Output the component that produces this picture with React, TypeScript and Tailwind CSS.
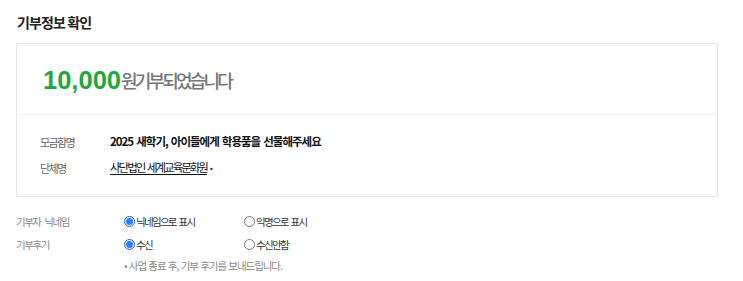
const KR = "font-['Noto_Sans_CJK_KR','Noto_Sans',sans-serif]";

function Radio({ checked, label }: { checked?: boolean; label: string }) {
  return (
    <label className="flex items-center">
      {checked ? (
        <span className="w-[11px] h-[11px] rounded-full border border-[#1d5fd6] bg-white flex items-center justify-center">
          <span className="w-[7px] h-[7px] rounded-full bg-[#2f7cf0]" />
        </span>
      ) : (
        <span className="w-[11px] h-[11px] rounded-full border border-[#777] bg-white" />
      )}
      <span className="text-[10.5px] tracking-[-1.7px] [word-spacing:2px] text-[#333] ml-[1px]">{label}</span>
    </label>
  );
}

export default function App() {
  return (
    <div className={`bg-white w-[743px] h-[281px] pl-4 pr-[25px] ${KR}`}>
      {/* TITLE */}
      <h2 className="pt-[12px] h-[43px] text-[14px] leading-[20px] font-bold tracking-[-0.9px] text-[#222] pl-[1px]">
        기부정보 확인
      </h2>

      {/* BOX */}
      <div className="border border-[#e6e6e6]">
        <div className="h-[71px] flex items-center pl-[26px] pt-[3px] border-b border-[#f0f0f0]">
          <span className="font-['Liberation_Sans',Arial,sans-serif] font-bold text-[25.5px] text-[#1ea83c]">
            10,000
          </span>
          <span className="text-[18px] font-medium text-[#777] tracking-[-2.8px]">원기부되었습니다</span>
        </div>

        <div className="pt-[14px] pb-[15px] pl-[23px]">
          <div className="flex items-center h-[26px]">
            <span className="w-[70px] text-[11px] tracking-[-1.6px] text-[#666]">모금함명</span>
            <span className="text-[11.5px] font-bold tracking-[-1px] [word-spacing:1.5px] text-[#111]">
              2025 새학기, 아이들에게 학용품을 선물해주세요
            </span>
          </div>
          <div className="flex items-center h-[26px]">
            <span className="w-[70px] text-[11px] tracking-[-1.6px] text-[#666]">단체명</span>
            <span className="text-[11.5px] tracking-[-2px] [word-spacing:2px] text-[#111] underline underline-offset-2">
              사단법인 세계교육문화원
            </span>
            <span className="text-[8px] text-[#111] ml-[3px]">•</span>
          </div>
        </div>
      </div>

      {/* OPTIONS */}
      <div className="mt-[13px]">
        <div className="flex items-center h-[23px]">
          <span className="w-[108px] text-[10.5px] tracking-[-1.5px] [word-spacing:3px] text-[#888]">기부자 닉네임</span>
          <div className="w-[120px]">
            <Radio checked label="닉네임으로 표시" />
          </div>
          <Radio label="익명으로 표시" />
        </div>
        <div className="flex items-center h-[23px]">
          <span className="w-[108px] text-[10.5px] tracking-[-1.4px] text-[#888]">기부후기</span>
          <div className="w-[120px]">
            <Radio checked label="수신" />
          </div>
          <Radio label="수신안함" />
        </div>
        <p className="pl-[108px] h-[20px] leading-[20px] text-[10.5px] tracking-[-1.05px] [word-spacing:1px] text-[#888]">
          • 사업 종료 후, 기부 후기를 보내드립니다.
        </p>
      </div>
    </div>
  );
}
